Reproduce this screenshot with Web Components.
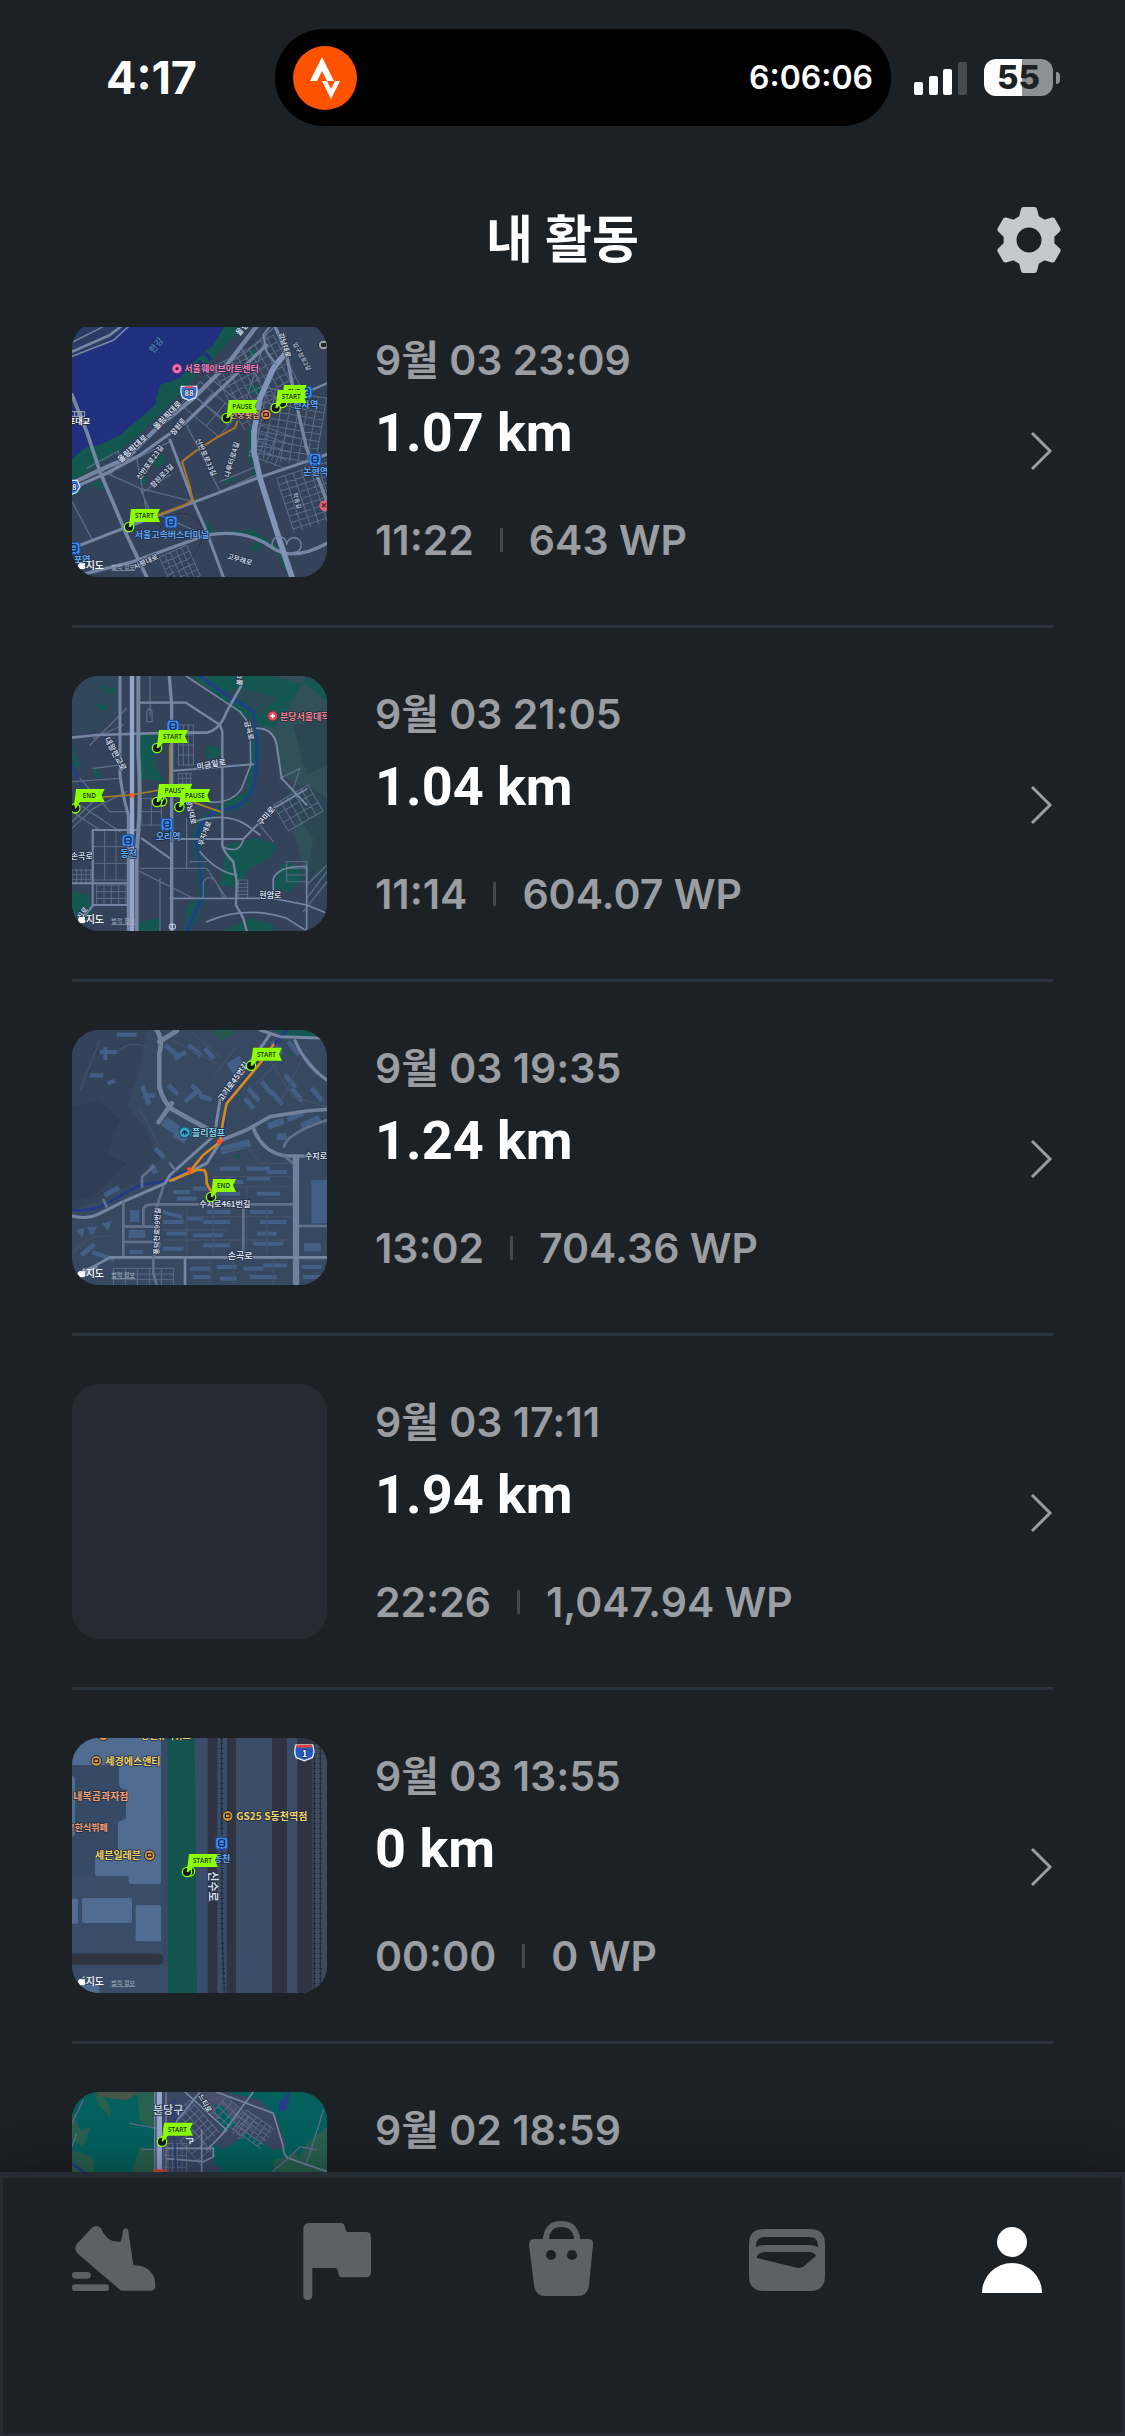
<!DOCTYPE html>
<html lang="ko">
<head>
<meta charset="utf-8">
<meta name="viewport" content="width=device-width, initial-scale=1">
<title>내 활동</title>
<style>
    :root {
        --bg: #1c2125;
        --panel: #252b33;
        --line: #2b353f;
        --muted: #9a9ea2;
        --icon: #5b6167;
    }

    body {
        margin: 0;
        background: var(--bg);
        color: #fff;
        font-family: Inter, "Noto Sans CJK KR", sans-serif;
    }
</style>
</head>
<body>
<activity-app>
    <status-bar slot="header" time="4:17" timer="6:06:06" battery="55"></status-bar>
    <page-header slot="header">내 활동</page-header>

    <activity-row>
        <route-map slot="map" route="terminal"></route-map>
        <span slot="date">9월 03 23:09</span>
        <span slot="distance">1.07 km</span>
        <span slot="duration">11:22</span>
        <span slot="points">643 WP</span>
    </activity-row>
    <activity-row>
        <route-map slot="map" route="ori"></route-map>
        <span slot="date">9월 03 21:05</span>
        <span slot="distance">1.04 km</span>
        <span slot="duration">11:14</span>
        <span slot="points">604.07 WP</span>
    </activity-row>
    <activity-row>
        <route-map slot="map" route="suji"></route-map>
        <span slot="date">9월 03 19:35</span>
        <span slot="distance">1.24 km</span>
        <span slot="duration">13:02</span>
        <span slot="points">704.36 WP</span>
    </activity-row>
    <activity-row>
        <route-map slot="map"></route-map>
        <span slot="date">9월 03 17:11</span>
        <span slot="distance">1.94 km</span>
        <span slot="duration">22:26</span>
        <span slot="points">1,047.94 WP</span>
    </activity-row>
    <activity-row>
        <route-map slot="map" route="dongcheon"></route-map>
        <span slot="date">9월 03 13:55</span>
        <span slot="distance">0 km</span>
        <span slot="duration">00:00</span>
        <span slot="points">0 WP</span>
    </activity-row>
    <activity-row>
        <route-map slot="map" route="bundang"></route-map>
        <span slot="date">9월 02 18:59</span>
    </activity-row>

    <tab-bar slot="footer"></tab-bar>
</activity-app>

<script>
// ---- map drawing helpers (3 units = 1px) ----
const path = (d, color, width) =>
    `<path d="${d}" fill="none" stroke="${color}" stroke-width="${width}" stroke-linejoin="round" stroke-linecap="round"/>`;
const area = (d, color) => `<path d="${d}" fill="${color}"/>`;
const road = (d, width = 9) => path(d, '#7586a2', width);
const lane = (d, width = 4) => path(d, '#5c6b86', width);
const label = (x, y, text, color = '#d3ddec', size = 24, turn = 0) =>
    `<text x="${x}" y="${y}" fill="${color}" font-size="${size}" transform="rotate(${turn} ${x} ${y})">${text}</text>`;
const station = (x, y) =>
    `<g transform="translate(${x} ${y})"><rect x="-18" y="-18" width="36" height="36" rx="8" fill="#3d8bea" stroke="#1a4a94" stroke-width="3"/>
     <rect x="-9" y="-11" width="18" height="20" rx="6" fill="none" stroke="#0e2a58" stroke-width="4"/><path d="M-7 0H7M-5 13l-4 4M5 13l4 4" stroke="#0e2a58" stroke-width="3"/></g>`;
const poi = (x, y, color) =>
    `<circle cx="${x}" cy="${y}" r="16" fill="${color}" stroke="#1b2434" stroke-width="3"/><rect x="${x - 7}" y="${y - 6}" width="14" height="11" rx="2" fill="none" stroke="#2b2430" stroke-width="4"/>`;
const pin = (x, y) =>
    `<circle cx="${x}" cy="${y}" r="14" fill="#11161c" stroke="#8cff00" stroke-width="4"/><path d="M${x} ${y}l7 -12" stroke="#8cff00" stroke-width="4"/>`;
const flag = (x, y, text, width = 87, px = x - 6, py = y + 54) =>
    pin(px, py) + `<path d="M${x} ${y}h${width}l-9 19 9 20h${-width + 12}l-14 16 -4 -6z" fill="#8cff00"/>
    <text class="flag" x="${x + width / 2 - 3}" y="${y + 27}" text-anchor="middle" font-size="19">${text}</text>`;
const legal = (y) => `
    <path d="M67 ${y - 20}q2 -6 7 -7q0 6 -7 7M54 ${y - 9}q0 -10 9 -9q4 2 8 0q3 0 5 2q-5 5 1 10q-3 8 -8 7q-4 -2 -7 0q-7 -2 -8 -10" fill="#fff"/>
    <text class="brand" x="77" y="${y}" font-size="30">지도</text>
    <text class="legal" x="154" y="${y}" font-size="18">법적 정보</text>`;

// parallel streets filling a tilted block
function blocks(x, y, w, h, stepX, stepY, turn) {
    let d = '';
    for (let i = 0; i <= w; i += stepX) d += `M${i} 0V${h}`;
    for (let j = 0; j <= h; j += stepY) d += `M0 ${j}H${w}`;
    return `<g transform="translate(${x} ${y}) rotate(${turn})">${lane(d, 3)}</g>`;
}

// scattered building footprints
function houses(list) {
    return list.map(([x, y, w, h, turn = 0]) =>
        `<rect x="${x}" y="${y}" width="${w}" height="${h}" fill="#435f85" transform="rotate(${turn} ${x} ${y})"/>`).join('');
}

const ROUTES = {
    terminal: {
        box: '36 21 765 765',
        bg: '#34425a',
        draw: () => `
            ${area('M36 21H560L300 300 190 400 36 500z', '#14574f')}
            ${area('M36 21H500L460 90 390 150 360 190 300 210 285 270 240 310 180 360 120 390 80 395 36 432z', '#20307f')}
            ${area('M430 118l10 -6 16 18 -8 8zM412 140l8 -6 14 16 -10 6z', '#20307f')}
            ${area('M36 21H200L180 50 130 85 36 132z', '#2a3c63')}
            ${road('M36 110L150 60 200 21', 8)}${road('M36 124L160 76 220 21', 5)}${road('M36 82L120 40 150 21', 4)}
            ${area('M575 110l16 -8 -4 30 -22 -4zM566 208l38 6 -10 26 -30 -10zM566 330l20 20 -4 60 14 80 -10 10 -20 -90zM276 440l36 -26 4 30 -28 16zM242 490l14 -8 4 24 -12 4zM492 494l26 -12 8 12 -28 16zM36 540L118 494 134 520 124 526 100 508 40 545zM440 610l20 40 120 -4 90 60 30 79h-14L650 710 560 655 440 660zM570 700l16 -20 18 10 -16 24z', '#14574f')}
            ${blocks(640, 60, 210, 210, 24, 21, 62)}${blocks(800, 250, 210, 200, 22, 26, 100)}
            ${blocks(650, 490, 190, 170, 26, 20, -18)}${blocks(600, 330, 110, 100, 28, 24, 20)}
            ${blocks(420, 200, 150, 90, 50, 45, 40)}${blocks(380, 690, 100, 90, 20, 18, 66)}
            ${lane('M36 560L100 680M130 470L240 520 270 590M240 520L400 560M330 380L230 430 260 590M250 530L330 480M380 330L480 530M440 180L560 280M400 240L500 320M300 600L410 650M540 90L600 200M620 60L560 250M480 530L590 480M480 500L600 450')}
            ${lane('M150 480L180 440 175 408 80 460M640 40L560 110 480 160')}
            ${road('M36 505L120 465 200 430 300 330 400 250 500 150 600 21', 13)}
            ${road('M36 520L140 475 240 420 380 320 620 90', 10)}
            ${road('M36 240L80 350 120 470 200 660 260 786', 11)}
            ${road('M36 700L190 640 400 562 590 490 801 418', 9)}
            ${road('M330 375L400 560 440 650 490 786', 9)}
            ${road('M36 786L220 740 440 660Q560 640 640 700Q700 740 801 685', 10)}
            ${path('M680 110L640 160 600 250 582 350 582 410 600 490 660 680 696 786', '#8093b8', 17)}
            ${road('M640 21L680 120 705 250 740 400 801 560', 10)}${road('M640 21L610 60 620 110 650 150', 6)}${road('M801 205L720 240', 7)}
            ${road('M640 700a22 22 0 1 1 40 -12a22 22 0 1 1 20 24', 4)}${path('M300 640C350 560 420 600 430 650C420 720 380 740 330 786', '#2a3547', 3)}
            ${path('M532 320L526 338 470 368 405 410 366 440 390 516 398 556 370 572 295 600', '#a87428', 6)}
            ${label(280, 116, '한강', '#3d7ad0', 27, -50)}
            <circle cx="351" cy="161" r="15" fill="#ee6fb8" stroke="#5d2b55" stroke-width="3"/><circle cx="351" cy="161" r="5" fill="#4d1b45"/>
            ${label(373, 171, '서울웨이브아트센터', '#f37fc0', 27)}
            <path d="M364 214h46q4 18 -4 34l-19 8 -19 -8q-8 -16 -4 -34z" fill="#2f6fd8" stroke="#d7e4f7" stroke-width="4"/><path d="M374 217h26" stroke="#d45" stroke-width="6"/>
            ${label(373, 243, '88', '#e8f0ff', 24)}
            ${label(290, 346, '올림픽대로', '#d3ddec', 24, -46)}${label(182, 444, '올림픽대로', '#d3ddec', 24, -42)}
            ${label(342, 362, '잠원로', '#d3ddec', 21, -52)}${label(240, 496, '신반포로23길', '#c2cde0', 21, -54)}
            ${label(280, 520, '잠원로3길', '#c2cde0', 21, -46)}${label(406, 374, '신반포로33길', '#c2cde0', 21, 66)}
            ${label(508, 488, '나루터로4길', '#c2cde0', 21, -74)}${label(655, 56, '강남대로', '#d3ddec', 21, 72)}
            ${label(698, 86, '압구정로2길', '#aab6cc', 18, 62)}${label(538, 64, '올림', '#d3ddec', 24, -48)}
            ${label(698, 535, '학동길', '#aab6cc', 18, 74)}${label(500, 730, '고무래로', '#c2cde0', 21, 16)}
            ${label(226, 764, '사평대로', '#c2cde0', 21, -26)}
            ${label(24, 328, '포대교', '#fff', 24)}<path d="M36 290h38v14h-38M44 290v16M54 290v16M64 290v16" stroke="#aab" stroke-width="3" fill="none"/>
            <circle cx="790" cy="90" r="15" fill="#9aa0aa" stroke="#222" stroke-width="3"/><rect x="783" y="84" width="16" height="12" rx="4" fill="#23272e"/>
            ${station(738, 232)}${label(700, 278, '신사역', '#5ea6f5', 27)}
            ${station(765, 433)}${label(730, 479, '논현역', '#5ea6f5', 27)}
            <circle cx="794" cy="572" r="16" fill="#e2626c"/><path d="M786 565l12 12M798 565l-12 12" stroke="#6b2230" stroke-width="4"/>
            ${station(333, 621)}${label(224, 668, '서울고속버스터미널', '#5ea6f5', 27)}
            ${station(42, 700)}${label(42, 745, '포역', '#5ea6f5', 27)}
            <path d="M30 496h22l8 20 -10 16 -20 8z" fill="#2f6fd8" stroke="#d7e4f7" stroke-width="4"/>${label(37, 524, '8', '#e8f0ff', 21)}
            ${label(510, 309, '인중횟집', '#e9a46c', 24)}${poi(618, 299, '#e08a45')}
            ${flag(672, 210, 'END', 68)}${flag(653, 225, 'START')}${flag(506, 255, 'PAUSE')}${flag(213, 582, 'START')}
            ${legal(762)}`
    },

    ori: {
        box: '36 33 765 765',
        bg: '#34425a',
        draw: () => `
            ${area('M620 33H801V660L740 640 700 500 735 370 660 330 640 210 600 180 560 90 430 33z', '#31505a')}
            ${area('M660 380L740 360 801 400V660L740 640 760 520zM700 180L801 160V300L740 330z', '#2c4753')}
            ${area('M36 33H170L180 140 100 200 36 210z', '#30485a')}
            ${area('M440 33H640L740 60 801 110V33H740L690 120 640 190 600 180 580 300 560 410 480 440 470 425 560 380 580 170 480 100z', '#155852')}
            ${area('M500 80Q560 60 650 100L600 150 520 110z', '#2c4a55')}
            ${area('M245 200L290 210 285 300 315 350 240 340 236 280zM36 230L60 300 40 320zM440 240l40 10v30h-44zM500 540l90 -20 60 20 -20 40 -60 30 -40 60 -50 -10 10 -60zM36 680l50 10 10 60 -60 30zM240 770l60 -10v38h-64zM380 730l20 -30 20 60 -40 38zM660 600q60 -20 70 40l-40 40 -50 -10zM500 790l80 -30 60 20v18h-150zM100 110l40 14 -10 16zM120 60l60 14 -40 14zM100 300l30 40 -30 -8z', '#155852')}
            ${path('M410 33Q470 80 580 140Q600 240 580 350Q570 430 480 435Q400 470 410 540L430 690 380 798', '#155852', 22)}
            ${path('M420 33Q480 80 580 138Q600 240 584 350Q570 430 480 435Q400 470 410 540L430 690 380 798', '#253c86', 10)}
            ${path('M36 300L60 350 70 390', '#253c86', 7)}
            ${blocks(100, 495, 100, 150, 34, 50, 0)}${blocks(110, 660, 90, 60, 22, 20, 0)}${blocks(355, 180, 45, 120, 15, 30, 0)}
            ${blocks(355, 325, 40, 60, 12, 15, 0)}${blocks(244, 400, 60, 80, 30, 40, 0)}${blocks(640, 420, 120, 90, 24, 30, -30)}
            ${blocks(36, 615, 60, 40, 14, 14, 0)}${blocks(535, 645, 28, 56, 28, 11, 0)}${blocks(680, 590, 60, 60, 60, 20, 0)}
            ${lane('M36 350L180 340M60 340L150 440 200 440M36 490L100 430 200 380M36 440L120 495M60 420L180 500M36 470L110 400M100 310L180 300M270 33V150M260 140q10 -20 16 0v30h-16zM90 240L180 150M100 220L190 180M115 215L200 130M240 610H440L500 700M240 620L400 700M300 640V798M660 340L720 310 700 370M640 530L600 480M430 700V650Q460 610 490 700M380 460V610H330M390 590H440M740 700L801 620M730 740L801 650M740 660L801 600')}
            ${road('M378 33L540 140 570 180 572 300 545 370Q520 410 460 412L400 400', 5)}
            ${road('M242 113H378L480 180 487 200V540Q490 560 520 590L530 650 528 720 550 760 560 798', 7)}
            ${road('M36 218L110 210 340 203H440Q480 195 500 140L545 60', 8)}${road('M342 317L580 298M342 392L400 405', 6)}
            ${road('M245 520L330 580M340 522H550L640 430 740 372M590 190Q640 190 650 240L665 340 740 420', 6)}
            ${road('M400 470Q500 440 560 480L600 510M420 560Q470 620 530 630M488 545Q540 570 550 522', 5)}
            ${road('M330 700H640L740 720 801 745M640 640V700M640 640Q660 600 740 605V798M440 770Q560 720 680 760L740 798', 5)}
            ${road('M36 655H200M98 495V720M98 495H240M98 720H200M36 798L100 720', 6)}
            ${road('M180 33V330Q185 380 205 450V798', 9)}${path('M216 33V798', '#93a5cb', 13)}${road('M235 33V270Q245 400 230 560V798', 12)}
            ${road('M328 33L335 120V798', 10)}
            ${path('M330 240V370L300 375 215 390 130 396', '#a8822a', 5)}${path('M395 410L480 440', '#a8822a', 6)}<circle cx="215" cy="391" r="7" fill="#ff5a1f"/>
            ${label(545, 62, '불미', '#d3ddec', 21, -84)}${label(133, 222, '대왕판교로', '#c2cde0', 24, 62)}${label(553, 170, '금곡로', '#d3ddec', 21, 76)}
            ${label(412, 314, '미금일로', '#d3ddec', 24, -10)}${label(378, 404, '성남대로', '#d3ddec', 21, 78)}
            ${label(428, 544, '무지개로', '#d3ddec', 21, -70)}${label(604, 484, '구미로', '#d3ddec', 24, -50)}
            ${label(32, 582, '손곡로', '#d3ddec', 24)}${label(598, 700, '현암로', '#d3ddec', 24)}${label(62, 764, '진로', '#c2cde0', 21, -54)}
            <circle cx="638" cy="153" r="15" fill="#d9485b" stroke="#7b2533" stroke-width="3"/><path d="M631 153h14M638 146v14" stroke="#fff" stroke-width="5"/>
            ${label(660, 165, '분당서울대학', '#f0808c', 27)}
            ${station(339, 184)}${station(321, 478)}${label(287, 524, '오리역', '#5ea6f5', 27)}
            ${station(204, 527)}${label(181, 577, '동천', '#5ea6f5', 27)}
            ${flag(297, 195, 'START')}${pin(306, 409)}${flag(297, 357, 'PAUSE', 100)}${flag(364, 372, 'PAUSE')}${flag(48, 372, 'END', 86, 46, 430)}
            <rect x="328" y="778" width="18" height="14" rx="3" fill="none" stroke="#d3ddec" stroke-width="3"/><path d="M337 776v18" stroke="#d3ddec" stroke-width="3"/>
            ${legal(774)}`
    },

    suji: {
        box: '36 30 765 765',
        bg: '#374961',
        draw: () => `
            ${area('M36 30H260L240 150 200 260 260 330 300 420 240 480 120 540 36 570z', '#33435a')}
            ${area('M36 260L120 240 180 300 140 400 200 430 100 530 36 540z', '#2f3e54')}
            ${area('M450 30h78q0 18 -30 22l-14 12 -20 -20z', '#22584f')}${area('M640 30h161v20l-120 0z', '#155852')}
            ${area('M684 98l10 -4 4 10 -8 8zM628 182l10 -5 3 8 -8 5zM526 402h14v14h-14z', '#155852')}
            ${houses([[170, 38, 60, 12], [130, 80, 12, 40], [120, 90, 50, 12], [90, 160, 40, 12], [140, 185, 24, 12, -20], [240, 200, 14, 60, -20], [250, 220, 36, 14], [320, 70, 50, 14, 40], [340, 110, 40, 14, -30], [390, 70, 50, 14, 40], [440, 80, 40, 14, 50], [330, 190, 40, 14, 45], [370, 240, 50, 14, -40], [400, 190, 40, 14, 45], [420, 220, 40, 14, 20], [500, 130, 44, 36, -30], [320, 290, 50, 30, 35], [370, 320, 50, 20, 20], [480, 380, 90, 24, -15], [350, 330, 40, 24, 30], [290, 380, 40, 14, 45], [280, 430, 30, 16, 60], [130, 520, 50, 14, -28], [640, 60, 50, 14, 50], [690, 60, 50, 14, 50], [570, 200, 50, 14, 50], [610, 180, 50, 14, 50], [640, 210, 50, 14, 50], [680, 160, 50, 14, 50], [700, 200, 50, 14, 50], [740, 110, 60, 14, 50], [760, 200, 50, 14, 50], [560, 230, 40, 14, 50], [620, 310, 50, 20, -20], [680, 290, 50, 16, -20], [720, 310, 60, 18, -24], [650, 340, 30, 20]])}
            ${houses([[480, 440, 60, 12], [560, 440, 70, 12], [620, 450, 60, 12], [500, 480, 50, 12], [560, 470, 70, 12], [470, 515, 70, 12], [590, 515, 70, 12], [400, 500, 40, 12], [340, 510, 50, 12], [350, 530, 60, 12], [310, 570, 60, 12, 15], [380, 590, 50, 12], [310, 600, 60, 12], [440, 570, 70, 12], [430, 600, 80, 12], [320, 635, 60, 12], [400, 640, 90, 12], [430, 670, 80, 12], [310, 680, 60, 12], [570, 570, 70, 12], [600, 600, 80, 12], [590, 635, 60, 12], [580, 665, 90, 12], [390, 740, 60, 12], [470, 735, 60, 12], [550, 740, 60, 12], [610, 730, 70, 12], [400, 765, 50, 12], [480, 770, 50, 12], [570, 765, 80, 12], [754, 480, 47, 130], [732, 670, 50, 24], [725, 735, 60, 12], [730, 765, 60, 12], [210, 570, 28, 36], [206, 630, 50, 24], [210, 690, 40, 12], [60, 700, 50, 14, -40], [100, 690, 70, 14, 20]])}
            ${area('M48 630l26 -6 -6 28zM80 620l32 0 -16 28zM126 610l30 -8 -12 30z', '#435f85')}
            ${path('M460 170L530 80M590 60L700 230 801 260M660 120L590 190M740 90L660 250M400 40L480 110M340 60L470 130M60 210L120 60M240 270L300 380M450 400L560 380 600 430H700M460 470H690M460 500H690M560 500V700M460 555V700M620 555V700M310 660H690M380 590H690M310 630H500M380 555V700M640 720V795M520 720V795M450 720V795M716 720H801M170 100Q200 60 260 80M40 700Q80 640 160 650', '#43516a', 4)}
            ${blocks(160, 745, 180, 50, 36, 17, 0)}
            ${path('M680 30L640 80 500 240 490 350 390 450 310 485 240 495 140 550Q100 575 36 570', '#23398a', 8)}
            ${path('M290 30Q310 60 298 100V200Q310 250 340 270L440 325M298 65L350 33M296 306L335 250', '#6f819c', 14)}
            ${path('M485 360L560 330 630 290 740 273 801 268M580 325Q610 400 680 408H735', '#6f819c', 11)}
            ${path('M600 30L660 50 801 55M705 62Q740 140 801 180M632 40L590 100 480 240 466 330', '#7586a2', 9)}
            ${path('M470 340L330 465 315 490 190 545 120 580Q80 600 36 588M340 480L440 430 485 360', '#7586a2', 9)}
            ${path('M130 540l10 20M190 545V710M310 500L290 560M250 620V570Q250 553 280 553H700M196 620H280M196 666H280M246 500V470L280 440M330 430L345 450M672 380Q680 340 801 300M668 405L700 430M550 555V700M715 618H801', '#61718c', 8)}
            ${path('M708 418V795', '#6f819c', 19)}${path('M36 770L100 740 150 712H801M375 712V795M60 770L110 740', '#7586a2', 8)}${path('M300 670L280 712V760L290 795', '#61718c', 8)}
            ${path('M640 75L600 130 550 190 500 250 490 300 480 365 430 405 385 460 330 482', '#d98a1a', 8)}
            ${path('M388 460L410 450H432Q440 455 440 490L452 512', '#d98a1a', 8)}
            <circle cx="479" cy="364" r="8" fill="#ff4d1c"/><path d="M386 442l4 20" stroke="#ff4d1c" stroke-width="10"/>
            ${label(486, 246, '고기로45번길', '#d3ddec', 24, -54)}
            <circle cx="374" cy="337" r="16" fill="#35a5c9" stroke="#14506a" stroke-width="3"/><path d="M366 342q8 -18 16 0M374 332v12" stroke="#0d3347" stroke-width="4" fill="none"/>
            ${label(396, 348, '플리점프', '#7fd0e3', 27)}${label(735, 417, '수지로', '#d3ddec', 24)}${label(418, 561, '수지로461번길', '#d3ddec', 24)}
            ${label(296, 704, '풍덕천로99번길', '#d3ddec', 21, -88)}${label(503, 717, '손곡로', '#d3ddec', 27)}
            ${flag(579, 83, 'START')}${flag(459, 477, 'END', 69)}
            ${legal(771)}`
    },

    dongcheon: {
        box: '36 24 765 765',
        bg: '#3a4d68',
        draw: () => `
            ${area('M36 24H303V455Q303 462 296 462H212Q205 462 205 438H112Q105 438 105 430V370H174V275Q198 270 198 260V180Q177 175 177 165V105H36z', '#506d91')}
            ${area('M36 105H177V165Q177 175 198 180V265Q174 270 174 280V380H105V440H36z', '#374a65')}${area('M36 138q9 0 9 12v160q-2 10 -9 10z', '#506d91')}
            <rect x="66" y="504" width="150" height="75" rx="6" fill="#506d91"/><rect x="20" y="506" width="34" height="75" rx="6" fill="#506d91"/><rect x="227" y="526" width="79" height="108" rx="6" fill="#506d91"/>
            <rect x="10" y="671" width="302" height="33" rx="16" fill="#2f3342"/><path d="M310 666h20v45h-20z" fill="#374a65"/>
            ${area('M303 24H322V666H303z', '#374a65')}${area('M322 24H404L408 450 411 789H324z', '#145550')}
            ${area('M443 24h29V789h-29zM501 24h27V789h-28zM636 24h45V789h-45zM712 24h46V789h-46z', '#2f3342')}
            ${area('M758 24h43V789h-43z', '#3c4a5d')}${area('M36 765h80q4 16 0 24H36z', '#506d91')}
            <path d="M485 24L486 600 493 789M763 24V789M781 24V789" stroke="#232a36" stroke-width="3" fill="none"/>
            <path d="M485 24L486 600 493 789M763 24V789M781 24V789" stroke="#232a36" stroke-width="9" stroke-dasharray="3 12" fill="none"/>
            ${poi(130, 16, '#d79a35')}${label(243, 27, '동천유적뷔포', '#f0d465', 27)}
            ${poi(109, 93, '#d79a35')}${label(136, 105, '세경에스앤티', '#f0d465', 30)}
            ${label(40, 211, '내복곰과자점', '#f2a274', 30)}${label(34, 304, '!한식뷔페', '#f2a274', 27)}
            ${label(105, 388, '세븐일레븐', '#f0d465', 30)}${poi(269, 376, '#d79a35')}
            ${poi(503, 258, '#d79a35')}${label(529, 269, 'GS25 S동천역점', '#f0d465', 30)}
            ${station(485, 340)}${label(461, 396, '동천', '#5ea6f5', 27)}
            ${label(448, 424, '신수로', '#d3ddec', 33, 90)}
            <path d="M708 45h50q8 20 -1 38l-24 9 -24 -9q-9 -18 -1 -38z" fill="#2358c4" stroke="#dfe8f6" stroke-width="4"/><path d="M710 49h46" stroke="#d8443c" stroke-width="9"/>
            <text x="726" y="81" font-size="27" fill="#fff">1</text>
            ${pin(390, 424)}${flag(387, 372, 'START')}
            ${legal(765)}`
    },

    bundang: {
        box: '36 36 765 765',
        bg: '#04605d',
        draw: () => `
            ${area('M36 90L60 150 90 140 70 200 36 180zM100 36Q160 60 150 110L120 80zM230 36H290L280 150 240 120zM36 210l60 20 10 50H36zM240 200l50 10v80h-80zM730 200l71 -60V290H700zM640 240l70 -20 20 60H640z', '#29604f')}
            ${area('M110 36H240L200 60 120 50z', '#4a5549')}${area('M284 36H500L600 60 650 110 680 200 640 210 560 160 520 190 490 210 460 190V250L490 270 300 300H284z', '#3b4663')}
            ${area('M420 36h60l60 60 -30 50 -50 -40z', '#4a4f6c')}${area('M460 70l30 10 40 50 -40 30z', '#04605d')}
            ${area('M660 60L690 36 680 90 655 95z', '#253c86')}
            ${blocks(390, 60, 130, 60, 20, 18, 48)}${blocks(500, 50, 120, 70, 22, 20, 42)}${blocks(560, 90, 100, 70, 18, 14, 35)}${blocks(310, 190, 70, 110, 14, 36, 0)}${blocks(400, 150, 100, 50, 26, 50, 50)}
            ${road('M320 205H460V230L430 245 320 236M375 36L500 150 440 210M580 36L480 170M470 36L640 100 670 200Q670 230 690 236L801 275M345 130L420 36M425 150V290', 5)}
            ${lane('M36 130L70 60M36 200L50 160M210 130L290 145M680 240L720 200 770 210M740 250L790 90M620 290L690 230M245 208H290')}
            ${path('M36 250L76 280', '#253c86', 7)}${path('M344 60V200L350 300', '#253c86', 5)}${road('M284 36V290', 4)}${path('M298 36V300', '#93a5cb', 16)}${road('M318 36V290', 4)}
            ${label(279, 102, '분당구', '#c3cede', 33)}${label(415, 48, '느티로', '#d3ddec', 21, 62)}
            <rect x="280" y="268" width="40" height="20" fill="#d8443c"/><path d="M378 176h20v8h-8v8" stroke="#d3ddec" stroke-width="4" fill="none"/>
            ${flag(312, 128, 'START', 87, 306, 185)}`
    }
};

class RouteMap extends HTMLElement {
    constructor() {
        super();
        this.shadow = this.attachShadow({mode: 'open'});
    }

    connectedCallback() {
        const route = ROUTES[this.getAttribute('route')];
        this.shadow.innerHTML = `
        <style>
            :host {
                display: block;
                aspect-ratio: 1;
                border-radius: 27px;
                overflow: hidden;
                background: var(--panel);
            }
            svg { display: block; width: 100%; height: 100%; }
            text {
                font-family: "Noto Sans CJK KR", sans-serif;
                font-weight: 700;
                paint-order: stroke;
                stroke: #202b3d;
                stroke-width: 4px;
                stroke-linejoin: round;
            }
            .flag { fill: #1b2b10; stroke: none; font-family: "Open Sans", sans-serif; font-weight: 600; }
            .brand { fill: #fff; stroke: none; font-weight: 500; }
            .legal { fill: #a9b2c0; stroke: none; font-weight: 400; text-decoration: underline; }
        </style>
        ${route ? `<svg viewBox="${route.box}" style="background:${route.bg}" role="img" aria-label="경로 지도">${route.draw()}</svg>` : ''}
        `;
    }
}

class StatusBar extends HTMLElement {
    constructor() {
        super();
        this.shadow = this.attachShadow({mode: 'open'});
    }

    connectedCallback() {
        this.shadow.innerHTML = `
        <style>
            :host {
                display: grid;
                grid-template-columns: 275fr 616fr 234fr;
                padding-top: 29px;
                font-weight: 700;
            }
            .time {
                display: flex;
                align-items: center;
                justify-content: center;
                padding-left: 28px;
                font-size: 45px;
            }
            .island {
                display: flex;
                align-items: center;
                justify-content: space-between;
                height: 97px;
                box-sizing: border-box;
                padding: 0 18px;
                border-radius: 49px;
                background: #000;
                font-size: 32px;
                font-weight: 600;
            }
            .island svg { width: 64px; height: 64px; }
            .right {
                display: flex;
                align-items: center;
                gap: 16px;
                padding-left: 23px;
            }
            .signal { width: 54px; height: 34px; }
            .battery { display: flex; align-items: center; gap: 3px; }
            .level {
                width: 69px;
                border-radius: 12px;
                background: linear-gradient(90deg, #fff 55%, #8e9194 55%);
                color: var(--bg);
                font-size: 33px;
                font-weight: 800;
                line-height: 37px;
                text-align: center;
            }
            .cap { width: 4px; height: 12px; border-radius: 0 6px 6px 0; background: #8e9194; }
        </style>
        <div class="time">${this.getAttribute('time')}</div>
        <div class="island">
            <svg viewBox="0 0 64 64" aria-hidden="true">
                <circle cx="32" cy="32" r="32" fill="#ff5200"/>
                <path d="M29 11L17 35h7l5 -10 5 10h7z" fill="#fff"/>
                <path d="M29 35h5l4 8 4 -8h5L38 53z" fill="#fff"/>
            </svg>
            <span>${this.getAttribute('timer')}</span>
        </div>
        <div class="right">
            <svg class="signal" viewBox="0 0 54 34" fill="#fff" aria-hidden="true">
                <rect y="21" width="9" height="13" rx="2"/>
                <rect x="15" y="15" width="9" height="19" rx="2"/>
                <rect x="29" y="8" width="9" height="26" rx="2"/>
                <rect x="44" y="1" width="9" height="33" rx="2" fill="#484c50"/>
            </svg>
            <div class="battery">
                <div class="level">${this.getAttribute('battery')}</div>
                <div class="cap"></div>
            </div>
        </div>
        `;
    }
}

class PageHeader extends HTMLElement {
    constructor() {
        super();
        this.shadow = this.attachShadow({mode: 'open'});
    }

    connectedCallback() {
        const teeth = [0, 60, 120, 180, 240, 300].map(turn =>
            `<path d="M-11 -19L-8 -31Q-7 -33 -6 -33H6Q7 -33 8 -31L11 -19z" transform="rotate(${turn})"/>`).join('');

        this.shadow.innerHTML = `
        <style>
            :host {
                display: grid;
                grid-template-columns: 66px 1fr 66px;
                align-items: center;
                padding: 77px 63px 50px;
            }
            h1 {
                grid-column: 2;
                margin: 0;
                font-size: 51px;
                font-weight: 700;
                line-height: 74px;
                text-align: center;
            }
            button { padding: 0; border: 0; background: none; cursor: pointer; }
            svg { display: block; width: 66px; height: 66px; }
        </style>
        <h1><slot></slot></h1>
        <button aria-label="설정">
            <svg viewBox="-33 -33 66 66" fill="#c5c8cf">
                ${teeth}
                <circle r="19" fill="none" stroke="#c5c8cf" stroke-width="13"/>
                <circle r="12" fill="#1c2125"/>
            </svg>
        </button>
        `;
    }
}

class ActivityRow extends HTMLElement {
    constructor() {
        super();
        this.shadow = this.attachShadow({mode: 'open'});
    }

    connectedCallback() {
        this.shadow.innerHTML = `
        <style>
            :host { display: block; }
            a {
                display: flex;
                gap: 48px;
                padding-bottom: 48px;
                border-bottom: 3px solid var(--line);
                color: inherit;
                text-decoration: none;
            }
            .map { flex: 0 0 255px; }
            .info {
                flex: 1;
                display: flex;
                flex-direction: column;
                padding: 12px 0 11px;
                color: var(--muted);
                font-size: 41px;
                font-weight: 600;
                line-height: 52px;
            }
            .distance {
                margin-top: 17px;
                color: #fff;
                font-family: Roboto, sans-serif;
                font-size: 54px;
                font-weight: 700;
                line-height: 60px;
            }
            .stats {
                display: flex;
                align-items: center;
                gap: 26px;
                margin-top: auto;
            }
            .stats i { width: 3px; height: 24px; background: #43484d; }
            .chevron { align-self: center; width: 24px; height: 42px; }
        </style>
        <a href="#activity">
            <div class="map"><slot name="map"></slot></div>
            <div class="info">
                <div><slot name="date"></slot></div>
                <div class="distance"><slot name="distance"></slot></div>
                <div class="stats"><slot name="duration"></slot><i></i><slot name="points"></slot></div>
            </div>
            <svg class="chevron" viewBox="0 0 24 42" fill="none" stroke="#9a9ea2" stroke-width="3" aria-hidden="true">
                <path d="M3 4l18 18L3 40"/>
            </svg>
        </a>
        `;
    }
}

class TabBar extends HTMLElement {
    constructor() {
        super();
        this.shadow = this.attachShadow({mode: 'open'});
    }

    connectedCallback() {
        this.shadow.innerHTML = `
        <style>
            :host {
                display: block;
                padding: 42px 0 131px;
                background: var(--bg);
                box-shadow: inset 0 6px var(--panel), inset 0 0 0 3px var(--panel), 0 -4px 40px rgba(0, 0, 0, .35);
            }
            nav { display: flex; }
            button {
                flex: 1;
                display: flex;
                justify-content: center;
                padding: 0;
                border: 0;
                background: none;
                color: var(--icon);
                cursor: pointer;
            }
            button[aria-current] { color: #fff; }
            svg { width: 91px; height: 91px; fill: currentColor; }
        </style>
        <nav>
            <button aria-label="러닝">
                <svg viewBox="21 12 273 273">
                    <path d="M96 53Q110 42 122 54Q134 78 146 87Q160 97 182 95Q188 78 189 62Q190 55 197 55Q204 55 205 63L220 165L245 169Q286 182 286 228Q286 242 272 242H183L52 130Q41 117 50 102z"/>
                    <rect x="36" y="186" width="56" height="20" rx="10"/>
                    <rect x="36" y="223" width="111" height="20" rx="10"/>
                </svg>
            </button>
            <button aria-label="챌린지">
                <svg viewBox="696 12 273 273">
                    <path d="M730 57Q730 39 748 39H844Q851 39 853 46L858 62Q860 66 864 66H917Q933 66 933 82V186Q933 202 917 202H846Q838 202 836 194L833 180Q831 174 826 174H757V256Q757 270 743 270Q730 270 730 256z"/>
                </svg>
            </button>
            <button aria-label="상점">
                <svg viewBox="0 0 91 91">
                    <path d="M29 27V24Q31 10 44 10Q58 10 60 24V27" fill="none" stroke="currentColor" stroke-width="6"/>
                    <path fill-rule="evenodd" d="M17 25H71Q77 25 76 31L72 71Q71 82 60 82H29Q18 82 17 71L12 31Q12 25 17 25zM29 41a5 5 0 1 0 10 0a5 5 0 1 0 -10 0M50 41a5 5 0 1 0 10 0a5 5 0 1 0 -10 0"/>
                </svg>
            </button>
            <button aria-label="지갑">
                <svg viewBox="0 0 91 91">
                    <path fill-rule="evenodd" d="M22 15H68Q83 15 83 30V62Q83 77 68 77H22Q7 77 7 62V30Q7 15 22 15zM23 23Q14 23 14 32V33Q18 31 23 31H67Q72 31 76 33V32Q76 23 67 23zM23 38Q18 38 15 42V44L56 54Q59 54 61 53L74 42Q72 38 67 38z"/>
                </svg>
            </button>
            <button aria-label="내 활동" aria-current="page">
                <svg viewBox="0 0 91 91">
                    <circle cx="45" cy="28" r="15"/>
                    <path d="M15 79A30 30 0 0 1 75 79z"/>
                </svg>
            </button>
        </nav>
        `;
    }
}

class ActivityApp extends HTMLElement {
    constructor() {
        super();
        this.shadow = this.attachShadow({mode: 'open'});
    }

    connectedCallback() {
        this.shadow.innerHTML = `
        <style>
            :host {
                display: flex;
                flex-direction: column;
                height: 100vh;
                overflow: hidden;
            }
            main { flex: 1; min-height: 0; overflow: hidden; }
            .list {
                display: flex;
                flex-direction: column;
                gap: 48px;
                margin-top: -5px;
                padding: 0 72px;
            }
        </style>
        <header><slot name="header"></slot></header>
        <main><div class="list"><slot></slot></div></main>
        <slot name="footer"></slot>
        `;
    }
}

customElements.define('route-map', RouteMap);
customElements.define('status-bar', StatusBar);
customElements.define('page-header', PageHeader);
customElements.define('activity-row', ActivityRow);
customElements.define('tab-bar', TabBar);
customElements.define('activity-app', ActivityApp);
</script>
</body>
</html>
